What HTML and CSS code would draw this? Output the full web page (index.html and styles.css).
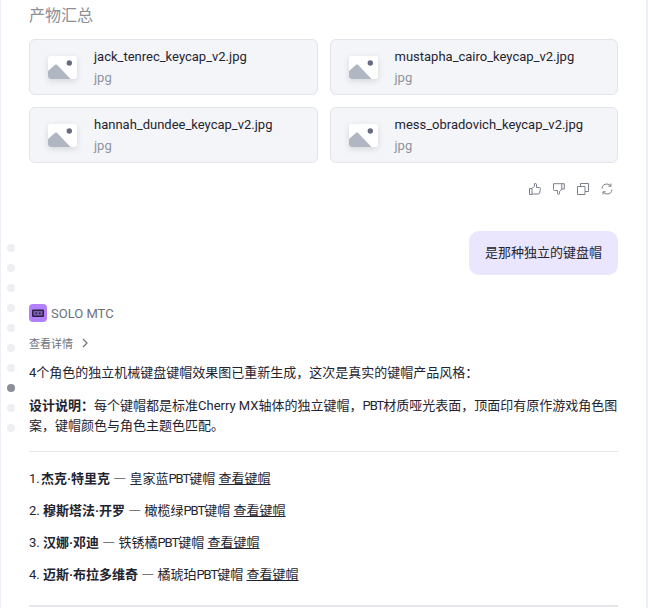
FILE: index.html
```html
<!DOCTYPE html>
<html lang="zh-CN">
<head>
    <meta charset="UTF-8">
    <title>SOLO MTC</title>
    <link rel="stylesheet" href="styles.css">
</head>
<body>

    <!-- scroll position dots -->
    <div class="dots">
        <span></span><span></span><span></span><span></span><span></span>
        <span></span><span></span><span class="active"></span><span></span><span></span>
    </div>

    <div class="chat">
        <h3 class="files-title">产物汇总</h3>

        <div class="files">
            <div class="file">
                <svg class="file-icon" viewBox="0 0 29 23"><rect width="29" height="23" rx="3" fill="#fff"/><path d="M0 15 L7 8.800 Q8 8 9 8.800 L22.500 23 L3 23 Q0 23 0 20 Z" fill="#b1b7c2"/><circle cx="21.300" cy="7" r="2.700" fill="#666d80"/></svg>
                <div class="file-info"><div class="file-name">jack_tenrec_keycap_v2.jpg</div><div class="file-type">jpg</div></div>
            </div>
            <div class="file">
                <svg class="file-icon" viewBox="0 0 29 23"><rect width="29" height="23" rx="3" fill="#fff"/><path d="M0 15 L7 8.800 Q8 8 9 8.800 L22.500 23 L3 23 Q0 23 0 20 Z" fill="#b1b7c2"/><circle cx="21.300" cy="7" r="2.700" fill="#666d80"/></svg>
                <div class="file-info"><div class="file-name">mustapha_cairo_keycap_v2.jpg</div><div class="file-type">jpg</div></div>
            </div>
            <div class="file">
                <svg class="file-icon" viewBox="0 0 29 23"><rect width="29" height="23" rx="3" fill="#fff"/><path d="M0 15 L7 8.800 Q8 8 9 8.800 L22.500 23 L3 23 Q0 23 0 20 Z" fill="#b1b7c2"/><circle cx="21.300" cy="7" r="2.700" fill="#666d80"/></svg>
                <div class="file-info"><div class="file-name">hannah_dundee_keycap_v2.jpg</div><div class="file-type">jpg</div></div>
            </div>
            <div class="file">
                <svg class="file-icon" viewBox="0 0 29 23"><rect width="29" height="23" rx="3" fill="#fff"/><path d="M0 15 L7 8.800 Q8 8 9 8.800 L22.500 23 L3 23 Q0 23 0 20 Z" fill="#b1b7c2"/><circle cx="21.300" cy="7" r="2.700" fill="#666d80"/></svg>
                <div class="file-info"><div class="file-name">mess_obradovich_keycap_v2.jpg</div><div class="file-type">jpg</div></div>
            </div>
        </div>

        <div class="actions">
            <svg viewBox="0 0 12 12"><path d="M.5 5.500h2.500v6H.5zM3 5.500 5.500 3V1q0-.7.7-.7 1.300 0 1.300 1.700v2.500h3q1 0 .9 1l-.8 4.500q-.2 1-1.100 1H3"/></svg>
            <svg viewBox="0 0 12 12"><path d="M.5.700h10.800v5.300H8.800L6.500 8.500v2q0 1-.8 1-1.200 0-1.200-1.700V7.500H1.500q-1 0-1-1z M8.800.700V6"/></svg>
            <svg viewBox="0 0 12 12"><path d="M.5 3.500h7.500v8H.5zM3.500 3.500V.5h8v8H8"/></svg>
            <svg viewBox="0 0 12 12"><path d="M1 5.500Q1.500 1 6 1q2.300 0 3.800 2M11 6.500q-.5 4.500-5 4.500-2.300 0-3.800-2M10 .5v2.700H7.300M2 11.500V8.800h2.700"/></svg>
        </div>

        <div class="user-row">
            <div class="bubble">是那种独立的键盘帽</div>
        </div>

        <div class="agent">
            <svg class="agent-logo" viewBox="0 0 18 18"><rect width="18" height="18" rx="4" fill="#b280fb"/><rect x="3" y="5.500" width="12" height="7.500" rx="1" fill="#2b2040"/><rect x="4.500" y="7" width="9" height="4.500" fill="#7d5bb5"/><rect x="6.500" y="8.500" width="1.500" height="1.500" fill="#2b2040"/><rect x="10" y="8.500" width="1.500" height="1.500" fill="#2b2040"/></svg>
            <span class="agent-name">SOLO MTC</span>
        </div>

        <div class="details">查看详情<svg viewBox="0 0 6 10"><path d="M1 1l4 4-4 4"/></svg></div>

        <p class="text">4个角色的独立机械键盘键帽效果图已重新生成，这次是真实的键帽产品风格：</p>
        <p class="text note"><strong>设计说明：</strong>每个键帽都是标准Cherry MX轴体的独立键帽，<span class="abbr">PBT</span>材质哑光表面，顶面印有原作游戏角色图案，键帽颜色与角色主题色匹配。</p>

        <hr class="divider">

        <ol class="caps">
            <li><span class="num">1.</span> <strong>杰克·特里克</strong> <span class="dash">—</span> 皇家蓝<span class="abbr">PBT</span>键帽 <a href="#">查看键帽</a></li>
            <li><span class="num">2.</span> <strong>穆斯塔法·开罗</strong> <span class="dash">—</span> 橄榄绿<span class="abbr">PBT</span>键帽 <a href="#">查看键帽</a></li>
            <li><span class="num">3.</span> <strong>汉娜·邓迪</strong> <span class="dash">—</span> 铁锈橘<span class="abbr">PBT</span>键帽 <a href="#">查看键帽</a></li>
            <li><span class="num">4.</span> <strong>迈斯·布拉多维奇</strong> <span class="dash">—</span> 橘琥珀<span class="abbr">PBT</span>键帽 <a href="#">查看键帽</a></li>
        </ol>

        <hr class="divider bottom">
    </div>

</body>
</html>
```

FILE: styles.css
```css
/* General */
html, body {
    height: 608px;
    overflow: hidden;
}

body {
    margin: 0;
    background-color: #fff;
    color: #1f2430;
    font-family: Roboto, 'Noto Sans CJK SC', sans-serif;
    font-size: 13px;
    border-left: 1px solid #eeeef6;
    border-right: 2px solid #eeeef6;
    box-sizing: border-box;
    position: relative;
}

.chat {
    padding: 0 28px;
}

/* Scroll dots */
.dots {
    position: absolute;
    left: 6px;
    top: 244px;
    display: flex;
    flex-direction: column;
    gap: 12px;
}

.dots span {
    width: 8px;
    height: 8px;
    border-radius: 50%;
    background-color: #eeeff2;
}

.dots .active {
    background-color: #8a8e99;
}

/* Files */
.files-title {
    margin: 0;
    padding-top: 6px;
    height: 39px;
    box-sizing: border-box;
    font-size: 16px;
    line-height: 20px;
    font-weight: 400;
    color: #8b8f98;
}

.files {
    display: grid;
    grid-template-columns: 1fr 1fr;
    gap: 12px;
}

.file {
    display: flex;
    align-items: center;
    height: 56px;
    box-sizing: border-box;
    padding-left: 18px;
    background-color: #f4f5f8;
    border: 1px solid #e2e4ea;
    border-radius: 6px;
}

.file-icon {
    width: 29px;
    height: 23px;
    flex-shrink: 0;
    margin-right: 17px;
    filter: drop-shadow(0 2px 3px rgba(0, 0, 0, 0.12));
}

.file-name {
    font-size: 13px;
    line-height: 18px;
    color: #1f2430;
}

.file-type {
    margin-top: 3px;
    font-size: 13px;
    line-height: 18px;
    color: #8f939c;
}

/* Actions */
.actions {
    display: flex;
    justify-content: flex-end;
    gap: 12px;
    padding: 20px 5px 0 0;
}

.actions svg {
    width: 12px;
    height: 12px;
    fill: none;
    stroke: #7b808a;
    stroke-width: 1;
}

/* User message */
.user-row {
    display: flex;
    justify-content: flex-end;
    margin-top: 36px;
}

.bubble {
    padding: 12px 16px;
    height: 44px;
    box-sizing: border-box;
    line-height: 20px;
    background-color: #e9e6fe;
    border-radius: 10px;
}

/* Agent message */
.agent {
    display: flex;
    align-items: center;
    gap: 4px;
    margin-top: 29px;
    height: 18px;
}

.agent-logo {
    width: 18px;
    height: 18px;
}

.agent-name {
    font-size: 13px;
    color: #6d717b;
}

.details {
    display: flex;
    align-items: center;
    margin-top: 12px;
    height: 18px;
    font-size: 11px;
    color: #6d717b;
}

.details svg {
    width: 6px;
    height: 10px;
    margin-left: 9px;
    fill: none;
    stroke: #6d717b;
    stroke-width: 1.2;
}

.text {
    margin: 11px 0 0;
    font-size: 13px;
    line-height: 20px;
}

.text.note {
    margin-top: 13px;
}

.text strong, .caps strong {
    font-weight: 700;
}

.abbr {
    letter-spacing: -1px;
}

.divider {
    margin: 15px 0 0;
    border: none;
    border-top: 1px solid #e6e7ec;
}

/* Keycap list */
.caps {
    list-style: none;
    margin: 0;
    padding: 6px 0 0;
}

.caps li {
    height: 32px;
    line-height: 40px;
    font-size: 13px;
}

.caps li:first-child .num {
    margin-right: -2px;
}

.caps .dash {
    font-family: 'Noto Sans CJK SC', sans-serif;
    color: #000;
}

.caps a {
    color: #1f2430;
    text-decoration: underline;
}

.divider.bottom {
    margin-top: 19px;
    border-top: 2px solid #e6e7ec;
}
```
